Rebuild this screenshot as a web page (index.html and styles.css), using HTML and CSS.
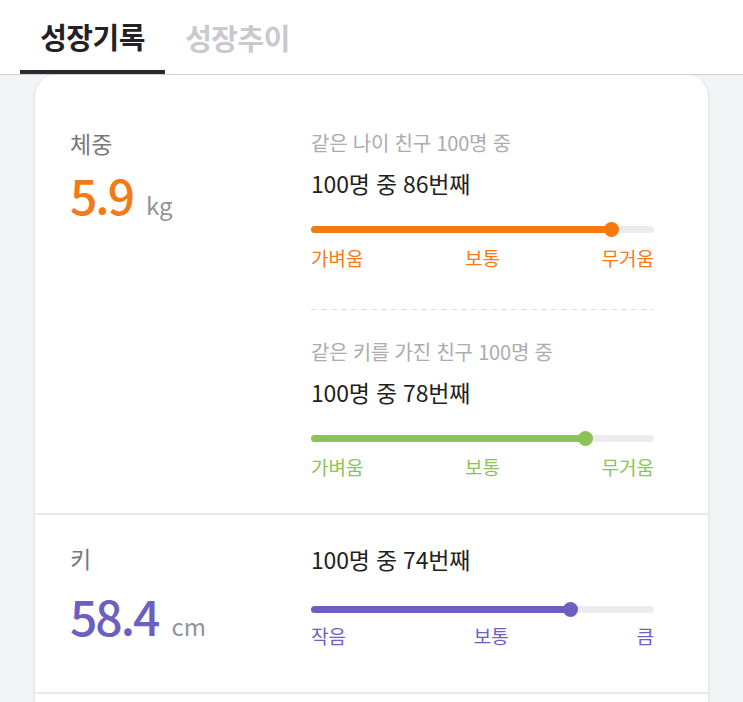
FILE: index.html
```html
<!DOCTYPE html>
<html lang="ko">
<head>
<meta charset="utf-8">
<link rel="stylesheet" href="styles.css">
</head>
<body>
<div class="tabs">
  <div class="tab active">성장기록</div>
  <div class="tab">성장추이</div>
</div>
<main class="page">
  <section class="card">
    <div class="row row-weight">
      <div class="left">
        <div class="label">체중</div>
        <div class="value orange">5.9<span class="unit">kg</span></div>
      </div>
      <div class="right">
        <div class="block">
          <div class="title">같은 나이 친구 100명 중</div>
          <div class="count">100명 중 86번째</div>
          <div class="bar"><div class="track"><div class="fill bg-orange" style="width:87.5%"><span class="thumb"></span></div></div></div>
          <div class="scale orange"><span>가벼움</span><span>보통</span><span>무거움</span></div>
        </div>
        <div class="dash"></div>
        <div class="block">
          <div class="title">같은 키를 가진 친구 100명 중</div>
          <div class="count">100명 중 78번째</div>
          <div class="bar"><div class="track"><div class="fill bg-green" style="width:80%"><span class="thumb"></span></div></div></div>
          <div class="scale green"><span>가벼움</span><span>보통</span><span>무거움</span></div>
        </div>
      </div>
    </div>
    <div class="row row-height">
      <div class="left">
        <div class="label">키</div>
        <div class="value purple value-height">58.4<span class="unit">cm</span></div>
      </div>
      <div class="right">
        <div class="block">
          <div class="count count-first">100명 중 74번째</div>
          <div class="bar bar-height"><div class="track"><div class="fill bg-purple" style="width:75.5%"><span class="thumb"></span></div></div></div>
          <div class="scale purple scale-height"><span>작음</span><span>보통</span><span>큼</span></div>
        </div>
      </div>
    </div>
    <div class="row row-next"></div>
  </section>
</main>
</body>
</html>
```
FILE: styles.css
```css
* { box-sizing: border-box; }
html, body { margin: 0; padding: 0; }
body {
  font-family: "Noto Sans CJK KR", "Noto Sans", sans-serif;
  background: #f3f4f6;
  color: #222;
  width: 743px;
  height: 702px;
  overflow: hidden;
}
.tabs {
  display: flex;
  height: 75px;
  background: #fff;
  border-bottom: 1px solid #cfcfd4;
  padding-left: 20px;
}
.tab {
  width: 145px;
  text-align: center;
  font-size: 29px;
  font-weight: 700;
  line-height: 74px;
  color: #c9c9ce;
  letter-spacing: -0.5px;
}
.tab.active {
  color: #222226;
  border-bottom: 4px solid #2a2a2e;
  line-height: 72px;
}
.page { padding: 0 33px; }
.card {
  width: 677px;
  background: #fff;
  border: 2px solid #e9e9ec;
  border-bottom: none;
  border-top: none;
  border-radius: 22px 22px 0 0;
  height: 627px;
  overflow: hidden;
}
.row {
  display: flex;
  border-bottom: 2px solid #e9e9ec;
}
.row-weight { padding: 56px 0 34px; }
.row-height { padding: 28px 0 38px; }
.left { width: 276px; padding-left: 35px; }
.row-weight .left { margin-top: -3px; }
.right { width: 343px; }
.label {
  font-size: 23px;
  line-height: 30px;
  color: #777779;
}
.value {
  font-size: 48px;
  font-weight: 500;
  line-height: 56px;
  margin-top: 8px;
  letter-spacing: -2px;
}
.value-height { margin-top: 14px; }
.unit {
  font-size: 24px;
  font-weight: 400;
  color: #939397;
  margin-left: 13px;
  letter-spacing: 0;
}
.orange { color: #f47a18; }
.green { color: #8cc258; }
.purple { color: #6c5fc2; }
.bg-orange { background: #f47a0e; }
.bg-green { background: #8cc258; }
.bg-purple { background: #6c5fc2; }
.title {
  font-size: 20px;
  line-height: 24px;
  color: #ababb1;
  letter-spacing: -0.2px;
}
.count {
  font-size: 23px;
  line-height: 32px;
  margin-top: 12px;
  color: #1f1f22;
  letter-spacing: -0.2px;
}
.count-first { margin-top: 0; }
.bar {
  height: 16px;
  margin-top: 22px;
  display: flex;
  align-items: center;
}
.bar-height { margin-top: 26px; }
.track {
  position: relative;
  width: 100%;
  height: 7px;
  border-radius: 4px;
  background: #ececee;
}
.fill {
  position: relative;
  height: 100%;
  border-radius: 4px;
}
.thumb {
  position: absolute;
  right: -8px;
  top: -4px;
  width: 15px;
  height: 15px;
  border-radius: 50%;
  background: inherit;
}
.scale {
  display: flex;
  justify-content: space-between;
  font-size: 19px;
  line-height: 24px;
  margin-top: 9px;
}
.scale-height { margin-top: 7px; }
.dash {
  height: 1px;
  margin: 39px 0 30px;
  background: repeating-linear-gradient(to right, #dcdce0 0 6px, transparent 6px 10px);
}
.row-next { height: 40px; border-bottom: none; }
```
